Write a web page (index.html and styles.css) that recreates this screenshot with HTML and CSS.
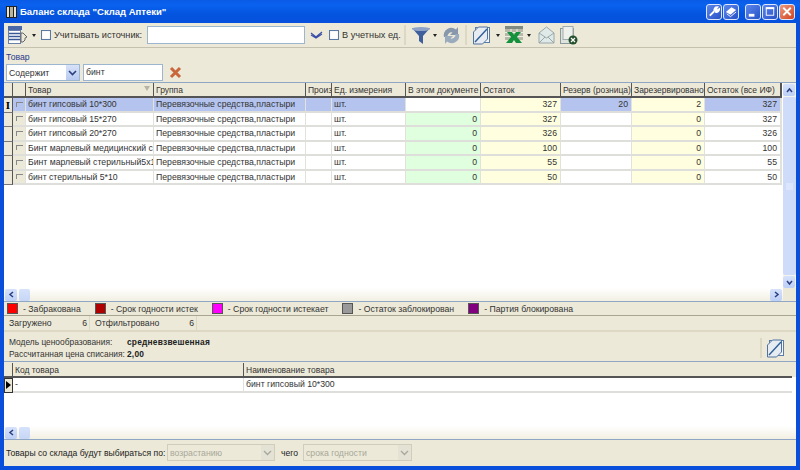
FILE: index.html
```html
<!DOCTYPE html>
<html lang="ru">
<head>
<meta charset="utf-8">
<title>Баланс склада</title>
<link rel="stylesheet" href="styles.css">
</head>
<body>
<div class="window">
  <header class="titlebar">
    <svg class="title-icon" width="11" height="12" viewBox="0 0 11 12"><rect width="11" height="12" fill="#222"/><rect x="1" y="1" width="2" height="10" fill="#e8e4d0"/><rect x="4" y="1" width="3" height="10" fill="#b8b4a0"/><rect x="8" y="1" width="2" height="10" fill="#e8e4d0"/></svg>
    <span class="title-text">Баланс склада "Склад Аптеки"</span>
    <div class="win-buttons">
      <span class="wbtn"><svg width="15" height="15" viewBox="0 0 15 15"><path d="M3 12l5-5M8 7a3 3 0 0 1 3-4l-1.500 2 1.500 1.500 2-1.500a3 3 0 0 1-4 3" stroke="#fff" stroke-width="2" fill="#fff"/></svg></span>
      <span class="wbtn gap-s"><svg width="15" height="15" viewBox="0 0 15 15"><path d="M2 8l6-5 5 3-6 5z" fill="#fff"/><path d="M3 10l4 3 6-5" stroke="#fff" fill="none"/></svg></span>
      <span class="wbtn gap-l"><svg width="15" height="15" viewBox="0 0 15 15"><rect x="3" y="10" width="6" height="3" fill="#fff"/></svg></span>
      <span class="wbtn gap-s"><svg width="15" height="15" viewBox="0 0 15 15"><rect x="3.500" y="3.500" width="8" height="8" fill="none" stroke="#fff"/><rect x="3" y="3" width="9" height="2" fill="#fff"/></svg></span>
      <span class="wbtn close gap-s"><svg width="15" height="15" viewBox="0 0 15 15"><path d="M3.500 3.500l8 8M11.500 3.500l-8 8" stroke="#fff" stroke-width="2"/></svg></span>
    </div>
  </header>

  <div class="content">
    <div class="toolbar">
      <svg class="ic-columns" width="20" height="18" viewBox="0 0 20 18"><rect x="0" y="0" width="14" height="4" fill="#4a68a8"/><rect x=".5" y="4.500" width="12" height="13" fill="#fff" stroke="#6a80a8"/><path d="M1 7.500h11M1 10.500h11M1 13.500h11" stroke="#3a5898" stroke-width="1.500"/><path d="M13 7h2l4 4-2 1v2l-2 2h-2z" fill="#ece9d8" stroke="#666"/></svg>
      <i class="drop"></i>
      <span class="check first-check"></span>
      <span class="lbl lbl-src">Учитывать источник:</span>
      <span class="field src-field"></span>
      <svg class="ic-chev" width="13" height="8" viewBox="0 0 13 8"><path d="M1 2l5 4 6-5M1 4l5 3 6-4" stroke="#3a4ea8" fill="none" stroke-width="1.200"/></svg>
      <span class="check unit-check"></span>
      <span class="lbl lbl-unit">В учетных ед.</span>
      <span class="sep sep-a"></span>
      <svg class="ic-funnel" width="20" height="19" viewBox="0 0 20 19"><path d="M1 2h18l-7 8v8l-4-3v-5z" fill="#3f5f9c"/><ellipse cx="10" cy="3" rx="9" ry="2" fill="#8fa3c8"/></svg>
      <i class="drop drop-f"></i>
      <svg class="ic-refresh" width="19" height="19" viewBox="0 0 19 19"><path d="M2 11a7.500 7.500 0 0 1 12-7.500L16 1v8H8l2.500-2.500A4 4 0 0 0 5.500 11z" fill="#8798ac"/><path d="M17 8a7.500 7.500 0 0 1-12 7.500L3 18v-8h8l-2.500 2.500a4 4 0 0 0 5-4.500z" fill="#9aabbd"/></svg>
      <span class="sep sep-b"></span>
      <svg class="ic-doc" width="17" height="19" viewBox="0 0 17 19"><rect x="2.500" y="1.500" width="14" height="15" fill="#f4f6f8" stroke="#5a7ba4"/><path d="M.5 18V6l5-5h9v12l-5 5z" fill="#e6ecf2" stroke="#52739c"/><path d="M2 16L14 3" stroke="#2d5f96" stroke-width="1.400"/></svg>
      <i class="drop drop-d"></i>
      <svg class="ic-excel" width="18" height="18" viewBox="0 0 18 18"><rect width="18" height="14" fill="#b8b8a8"/><rect width="18" height="3" fill="#7f8a80"/><path d="M0 6.500h18M0 10.500h18M6 3v11M12 3v11" stroke="#f0f0e8"/><path d="M2 6h5l2 3 2-3h5l-4 5 5 6h-6l-2-3-2 3H1l5-6z" fill="#14913c"/></svg>
      <i class="drop drop-e"></i>
      <svg class="ic-mail" width="17" height="18" viewBox="0 0 17 18"><path d="M1 7l7.500-6 7.500 6v10H1z" fill="#dfeae8" stroke="#98a8a8"/><path d="M1 7l7.500 5L16 7M1 17l6-6M16 17l-6-6" stroke="#98a8a8" fill="none"/></svg>
      <svg class="ic-docx" width="18" height="19" viewBox="0 0 18 19"><rect x=".5" y="2.500" width="13" height="15" fill="#dfe3de" stroke="#8a9a9a"/><rect x="3" y=".5" width="10" height="13" fill="#eef0ec" stroke="#a0abab"/><circle cx="13" cy="14" r="4.500" fill="#24502c"/><path d="M11 12l4 4M15 12l-4 4" stroke="#fff" stroke-width="1.200"/></svg>
    </div>

    <div class="filter">
      <div class="filter-label">Товар</div>
      <div class="filter-row">
        <span class="combo combo-f"><span class="combo-text">Содержит</span><span class="combo-btn"><svg width="9" height="6" viewBox="0 0 9 6"><path d="M1 1l3.500 3.500L8 1" stroke="#2a3f80" stroke-width="1.600" fill="none"/></svg></span></span>
        <span class="field name-field">бинт</span>
        <svg class="ic-clear" width="13" height="13" viewBox="0 0 13 13"><path d="M2 2l9 9M11 2l-9 9" stroke="#c8663c" stroke-width="3"/></svg>
      </div>
    </div>

    <section class="grid-panel">
      <div class="grid-main">
        <div class="grid-body">
          <table class="data">
            <colgroup>
              <col class="c-ind"><col class="c-chk"><col class="c-name"><col class="c-group"><col class="c-prod"><col class="c-unit"><col class="c-doc"><col class="c-rest"><col class="c-resv"><col class="c-rsv2"><col class="c-all"><col class="c-end">
            </colgroup>
            <thead>
              <tr><th></th><th></th><th class="sorted">Товар<i class="sort"></i></th><th>Группа</th><th>Произ</th><th>Ед. измерения</th><th>В этом документе</th><th>Остаток</th><th>Резерв (розница)</th><th>Зарезервировано</th><th>Остаток (все ИФ)</th><th></th></tr>
            </thead>
            <tbody>
              <tr class="sel"><td class="ind"><span class="ibeam">I</span></td><td class="chk"><i class="mini"></i></td><td>бинт гипсовый 10*300</td><td>Перевязочные средства,пластыри</td><td></td><td>шт.</td><td class="num white"></td><td class="num yel">327</td><td class="num">20</td><td class="num yel">2</td><td class="num">327</td><td></td></tr>
              <tr><td class="ind"></td><td class="chk"><i class="mini"></i></td><td>бинт гипсовый 15*270</td><td>Перевязочные средства,пластыри</td><td></td><td>шт.</td><td class="num grn">0</td><td class="num yel">327</td><td class="num"></td><td class="num yel">0</td><td class="num">327</td><td></td></tr>
              <tr><td class="ind"></td><td class="chk"><i class="mini"></i></td><td>бинт гипсовый 20*270</td><td>Перевязочные средства,пластыри</td><td></td><td>шт.</td><td class="num grn">0</td><td class="num yel">326</td><td class="num"></td><td class="num yel">0</td><td class="num">326</td><td></td></tr>
              <tr><td class="ind"></td><td class="chk"><i class="mini"></i></td><td>Бинт марлевый медицинский стерильный</td><td>Перевязочные средства,пластыри</td><td></td><td>шт.</td><td class="num grn">0</td><td class="num yel">100</td><td class="num"></td><td class="num yel">0</td><td class="num">100</td><td></td></tr>
              <tr><td class="ind"></td><td class="chk"><i class="mini"></i></td><td>Бинт марлевый стерильный5х10</td><td>Перевязочные средства,пластыри</td><td></td><td>шт.</td><td class="num grn">0</td><td class="num yel">55</td><td class="num"></td><td class="num yel">0</td><td class="num">55</td><td></td></tr>
              <tr><td class="ind"></td><td class="chk"><i class="mini"></i></td><td>бинт стерильный 5*10</td><td>Перевязочные средства,пластыри</td><td></td><td>шт.</td><td class="num grn">0</td><td class="num yel">50</td><td class="num"></td><td class="num yel">0</td><td class="num">50</td><td></td></tr>
            </tbody>
          </table>
        </div>
        <div class="hscroll">
          <span class="sbtn"><svg width="7" height="7" viewBox="0 0 7 7"><path d="M5 1L2 3.500 5 6" stroke="#2a3f80" stroke-width="1.500" fill="none"/></svg></span>
          <span class="sthumb"></span>
          <span class="sbtn sbtn-right"><svg width="7" height="7" viewBox="0 0 7 7"><path d="M2 1l3 2.500L2 6" stroke="#2a3f80" stroke-width="1.500" fill="none"/></svg></span>
        </div>
      </div>
      <div class="vscroll">
        <span class="sbtn"><svg width="7" height="7" viewBox="0 0 7 7"><path d="M1 5l2.500-3L6 5" stroke="#2a3f80" stroke-width="1.500" fill="none"/></svg></span>
        <span class="vthumb"><i class="grip"></i></span>
        <span class="sbtn"><svg width="7" height="7" viewBox="0 0 7 7"><path d="M1 2l2.500 3L6 2" stroke="#2a3f80" stroke-width="1.500" fill="none"/></svg></span>
        <span class="vcorner"></span>
      </div>
    </section>

    <div class="legend">
      <span class="leg"><i class="sw red"></i>- Забракована</span>
      <span class="leg"><i class="sw dark"></i>- Срок годности истек</span>
      <span class="leg"><i class="sw pink"></i>- Срок годности истекает</span>
      <span class="leg"><i class="sw grey"></i>- Остаток заблокирован</span>
      <span class="leg"><i class="sw purple"></i>- Партия блокирована</span>
    </div>

    <div class="status">
      <span class="st st-a"><span>Загружено</span><span>6</span></span>
      <span class="st st-b"><span>Отфильтровано</span><span>6</span></span>
    </div>

    <div class="info">
      <div class="info-text">
        <div class="info-line"><span class="info-k">Модель ценообразования:</span><b>средневзвешенная</b></div>
        <div class="info-line"><span class="info-k">Рассчитанная цена списания:</span><b>2,00</b></div>
      </div>
      <span class="sep sep-c"></span>
      <svg class="ic-doc2" width="17" height="19" viewBox="0 0 17 19"><rect x="2.500" y="1.500" width="14" height="15" fill="#f4f6f8" stroke="#5a7ba4"/><path d="M.5 18V6l5-5h9v12l-5 5z" fill="#e6ecf2" stroke="#52739c"/><path d="M2 16L14 3" stroke="#2d5f96" stroke-width="1.400"/></svg>
    </div>

    <section class="grid2">
      <div class="grid2-body">
        <table class="data data2">
          <colgroup><col class="c-ind"><col class="c-code"><col class="c-title"></colgroup>
          <thead><tr><th></th><th>Код товара</th><th>Наименование товара</th></tr></thead>
          <tbody><tr><td class="ind ind-cur"><i class="arrow"></i></td><td>-</td><td>бинт гипсовый 10*300</td></tr></tbody>
        </table>
      </div>
      <div class="hscroll hscroll2">
        <span class="sbtn"><svg width="7" height="7" viewBox="0 0 7 7"><path d="M5 1L2 3.500 5 6" stroke="#2a3f80" stroke-width="1.500" fill="none"/></svg></span>
        <span class="sthumb"></span>
      </div>
    </section>

    <footer class="bottom">
      <span class="bot-lbl">Товары со склада будут выбираться по:</span>
      <span class="combo combo-d combo-1"><span class="combo-text">возрастанию</span><span class="combo-btn"><svg width="9" height="6" viewBox="0 0 9 6"><path d="M1 1l3.500 3.500L8 1" stroke="#a8a8a0" stroke-width="1.400" fill="none"/></svg></span></span>
      <span class="bot-of">чего</span>
      <span class="combo combo-d combo-2"><span class="combo-text">срока годности</span><span class="combo-btn"><svg width="9" height="6" viewBox="0 0 9 6"><path d="M1 1l3.500 3.500L8 1" stroke="#a8a8a0" stroke-width="1.400" fill="none"/></svg></span></span>
    </footer>
  </div>
</div>
</body>
</html>
```

FILE: styles.css
```css
* { box-sizing: border-box; }
html, body { margin: 0; padding: 0; }
body { width: 800px; height: 470px; overflow: hidden; font-family: "Liberation Sans", Arial, sans-serif; font-size: 8.700px; color: #333; }
.window { width: 800px; height: 470px; display: flex; flex-direction: column; background: #0a4fdc; padding: 0 4px 4px 4px; }

.titlebar { height: 23px; margin: 0 -4px; padding: 0 5px 0 6px; display: flex; align-items: center; background: linear-gradient(#0a5ae6, #0a62ee 20%, #0455e0 60%, #0650dc); flex: none; }
.title-icon { margin-right: 3px; flex: none; }
.title-text { color: #fff; font-weight: bold; font-size: 9.500px; white-space: nowrap; }
.win-buttons { margin-left: auto; display: flex; }
.wbtn { width: 16px; height: 16px; border: 1px solid #dfe8fb; border-radius: 3px; background: linear-gradient(135deg, #5d86ea, #2752c8); display: flex; align-items: center; justify-content: center; }
.wbtn.close { background: linear-gradient(135deg, #ec9a80, #d2431e); }
.gap-s { margin-left: 1px; }
.gap-l { margin-left: 6px; }

.content { flex: 1; min-height: 0; display: flex; flex-direction: column; background: #ece9d8; }

.toolbar { height: 25px; flex: none; display: flex; align-items: center; padding-left: 4px; border-bottom: 1px solid #c4c1ae; font-size: 9.200px; }
.drop { width: 0; height: 0; border: 2.500px solid transparent; border-top: 3px solid #222; border-bottom: 0; flex: none; margin-left: 4px; }
.check { width: 10px; height: 10px; background: #fff; border: 1px solid #5a7aa5; box-shadow: inset 0 0 1px #bbb; flex: none; }
.first-check { margin-left: 5px; }
.lbl { margin-left: 3px; white-space: nowrap; }
.lbl-src { width: 93px; flex: none; }
.lbl-unit { width: 62px; flex: none; }
.field { background: #fff; border: 1px solid #9db6cf; display: block; padding-left: 2px; }
.src-field { width: 158px; height: 18px; flex: none; }
.ic-chev { margin-left: 5px; flex: none; }
.unit-check { margin-left: 6px; }
.sep { width: 2px; height: 20px; background: #dcd8c4; flex: none; }
.ic-funnel { margin-left: 5px; }
.drop-f { margin-left: 2px; }
.ic-refresh { margin-left: 5px; }
.sep-b { margin-left: 4px; }
.ic-doc { margin-left: 6px; }
.drop-d { margin-left: 6px; }
.ic-excel { margin-left: 5px; }
.drop-e { margin-left: 4px; }
.ic-mail { margin-left: 7px; }
.ic-docx { margin-left: 5px; }

.filter { height: 34px; flex: none; padding: 3px 0 0 2px; }
.filter-label { color: #2a3a8c; height: 12px; line-height: 12px; }
.filter-row { display: flex; align-items: center; margin-top: 1px; }
.combo { display: flex; align-items: center; justify-content: space-between; height: 17px; background: #fff; border: 1px solid #9db6cf; }
.combo-f { width: 74px; }
.combo-text { padding-left: 2px; white-space: nowrap; }
.combo-btn { width: 13px; height: 15px; display: flex; align-items: center; justify-content: center; background: linear-gradient(#d8e2f8, #b8caf2); }
.name-field { width: 80px; height: 17px; margin-left: 3px; line-height: 14px; }
.ic-clear { margin-left: 6px; }

.grid-panel { height: 220px; flex: none; display: flex; border-top: 1px solid #8fa6c4; border-bottom: 1px solid #8fa6c4; }
.grid-main { flex: 1; min-width: 0; display: flex; flex-direction: column; }
.grid-body { flex: 1; min-height: 0; background: #fff; overflow: hidden; }
table.data { border-collapse: separate; border-spacing: 0; table-layout: fixed; width: 778px; }
.c-ind { width: 9px; } .c-chk { width: 13px; } .c-name { width: 128px; } .c-group { width: 152px; } .c-prod { width: 26px; } .c-unit { width: 74px; }
.c-doc { width: 75px; } .c-rest { width: 80px; } .c-resv { width: 71px; } .c-rsv2 { width: 73px; } .c-all { width: 76px; } .c-end { width: 1px; }
.data th { height: 15px; padding: 0 0 0 2px; background: #ece9d8; border-right: 1px solid #555; border-bottom: 2px solid #555; font-weight: normal; font-size: 8.500px; text-align: left; white-space: nowrap; overflow: hidden; color: #333; }
.data td { height: 14.500px; padding: 0 0 0 2px; border-right: 1px solid #e2e2dc; border-bottom: 2px solid #dededa; white-space: nowrap; overflow: hidden; color: #333; line-height: 12px; }
.data td.num { text-align: right; padding: 0 3px 0 0; }
.data td.ind { background: #ece9d8; border-right: 1px solid #555; border-bottom: 1px solid #777; padding: 0; }
.data td.chk { background: #ece9d8; padding: 0 0 0 3px; }
.sorted { position: relative; }
.sort { position: absolute; right: 3px; top: 3px; width: 0; height: 0; border: 3px solid transparent; border-top: 5px solid #b8b4a4; border-bottom: 0; }
.mini { display: block; width: 7px; height: 5px; border-top: 1px solid #888; border-left: 1px solid #888; }
.ibeam { display: block; text-align: center; font-family: "Liberation Serif", serif; font-weight: bold; font-size: 11px; line-height: 12px; color: #000; }
.sel td { background: #b4c4ee; }
.sel td.chk { background: #b4c4ee; }
.sel td.white, td.white { background: #fff; }
.data td.yel { background: #ffffdf; }
.data td.grn { background: #dfffdf; }

.hscroll { height: 13px; flex: none; display: flex; align-items: center; padding-left: 1px; padding-right: 1px; background: linear-gradient(#fff, #f2efe2); }
.sbtn { width: 12px; height: 12px; flex: none; display: flex; align-items: center; justify-content: center; border-radius: 2px; background: linear-gradient(#d6e2fb, #bccff6); }
.sbtn-right { margin-left: auto; }
.sthumb { width: 11px; height: 12px; margin-left: 2px; border-radius: 2px; background: linear-gradient(#d6e2fb, #c6d6f6); }

.vscroll { width: 13px; flex: none; display: flex; flex-direction: column; background: #f4f4ee; padding-top: 1px; }
.vthumb { flex: 1; display: flex; align-items: center; justify-content: center; background: #cfdcf9; margin: 1px 0; border-radius: 2px; }
.grip { display: block; width: 7px; height: 7px; background: #dbe5fb; }
.vcorner { height: 13px; flex: none; background: #ece9d8; }

.legend { height: 13px; flex: none; display: flex; align-items: center; gap: 14px; padding-left: 3px; border-bottom: 1px solid #a8a590; box-sizing: content-box; }
.leg { display: flex; align-items: center; white-space: nowrap; }
.sw { display: block; width: 11px; height: 11px; border: 1px solid #555; margin-right: 5px; }
.red { background: #ff0000; } .dark { background: #b00000; } .pink { background: #ff00ff; } .grey { background: #999; } .purple { background: #800080; }

.status { height: 14px; flex: none; display: flex; border-bottom: 2px solid #dcd8c4; box-sizing: content-box; }
.st { display: flex; justify-content: space-between; align-items: center; border-right: 1px solid #dcd8c4; padding: 0 2px 0 5px; }
.st-a { width: 86px; } .st-b { width: 107px; }

.info { height: 26px; flex: none; margin-top: 3px; display: flex; align-items: center; padding: 0 12px 0 5px; font-size: 8.400px; }
.info-text { flex: 1; }
.info-line { display: flex; height: 12px; line-height: 12px; }
.info-k { width: 118px; white-space: nowrap; }
.info-line b { color: #222; letter-spacing: .2px; }
.sep-c { height: 20px; margin-right: 5px; }

.grid2 { flex: 1; min-height: 0; display: flex; flex-direction: column; border-top: 1px solid #8fa6c4; border-bottom: 1px solid #8fa6c4; padding-top: 1px; background: linear-gradient(#ece9d8 15px, #fff 15px); }
.grid2-body { flex: 1; min-height: 0; overflow: hidden; }
table.data2 { width: 788px; }
.c-code { width: 231px; } .c-title { width: 548px; }
.data2 th { border-right: 1px solid #555; }
.data2 th:last-child { border-right: 0; }
.data2 td:last-child { border-right: 0; }
.data td.ind-cur { background: #ece9d8; border: 1px solid #333; padding: 0; }
.arrow { display: block; width: 0; height: 0; margin: 0 0 0 1px; border: 4px solid transparent; border-left: 5px solid #000; border-right: 0; }
.hscroll2 { padding-left: 1px; }

.bottom { height: 26px; flex: none; display: flex; align-items: center; padding-left: 2px; padding-bottom: 1px; font-size: 8.600px; }
.bot-lbl { white-space: nowrap; color: #222; width: 161px; flex: none; }
.combo-d { height: 17px; border: 1px solid #d0cdbc; background: #ece9d8; color: #a8a898; font-size: 8.700px; flex: none; }
.combo-d .combo-btn { background: #e4e2d4; }
.combo-1 { width: 108px; }
.combo-2 { width: 109px; }
.bot-of { margin: 0 6px; color: #222; width: 16px; flex: none; }
```
